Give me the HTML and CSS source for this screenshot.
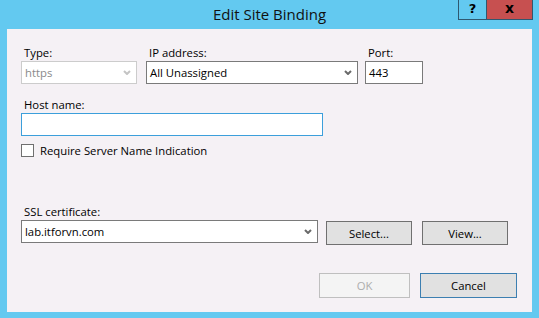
FILE: index.html
```html
<!DOCTYPE html>
<html lang="en">
<head>
    <meta charset="UTF-8">
    <title>Edit Site Binding</title>
    <link rel="stylesheet" href="styles.css">
</head>
<body>
    <div class="window">
        <div class="titlebar">
            <span></span>
            <span class="title">Edit Site Binding</span>
            <div class="caption-btns">
                <span class="cap-help">?</span>
                <span class="cap-close">x</span>
            </div>
        </div>
        <div class="client">
            <div class="row-top">
                <div class="field f-type">
                    <label>Type:</label>
                    <div class="combo disabled">
                        <span>https</span>
                        <svg width="8" height="5" viewBox="0 0 8 5"><polyline points="1,1 4,4 7,1" fill="none" stroke="#c4c4c4" stroke-width="2"/></svg>
                    </div>
                </div>
                <div class="field f-ip">
                    <label>IP address:</label>
                    <div class="combo">
                        <span>All Unassigned</span>
                        <svg width="8" height="5" viewBox="0 0 8 5"><polyline points="1,1 4,4 7,1" fill="none" stroke="#6a6a6a" stroke-width="2"/></svg>
                    </div>
                </div>
                <div class="field f-port">
                    <label>Port:</label>
                    <div class="textbox">443</div>
                </div>
            </div>
            <div class="field f-host">
                <label>Host name:</label>
                <div class="textbox focused"></div>
            </div>
            <div class="check-row">
                <span class="checkbox"></span>
                <span>Require Server Name Indication</span>
            </div>
            <div class="field f-ssl">
                <label>SSL certificate:</label>
                <div class="ssl-row">
                    <div class="combo ssl-combo">
                        <span>lab.itforvn.com</span>
                        <svg width="8" height="5" viewBox="0 0 8 5"><polyline points="1,1 4,4 7,1" fill="none" stroke="#6a6a6a" stroke-width="2"/></svg>
                    </div>
                    <button class="btn btn-select">Select...</button>
                    <button class="btn btn-view">View...</button>
                </div>
            </div>
            <div class="actions">
                <button class="btn btn-ok" disabled>OK</button>
                <button class="btn btn-cancel">Cancel</button>
            </div>
        </div>
    </div>
</body>
</html>
```

FILE: styles.css
```css
body {
    margin: 0;
    background: #63c9f0;
    font-family: "Open Sans", "Noto Sans", sans-serif;
    font-size: 11.3px;
    color: #000;
}
.window {
    width: 539px;
    height: 318px;
    background: #63c9f0;
}
.titlebar {
    height: 29px;
    display: grid;
    grid-template-columns: 1fr auto 1fr;
    align-items: start;
}
.title {
    font-size: 15px;
    line-height: 29px;
    color: #111;
}
.caption-btns {
    justify-self: end;
    display: flex;
    margin-right: 6px;
    border: 1px solid #2f5870;
    border-top: none;
    height: 19px;
}
.cap-help {
    width: 27px;
    border-right: 1px solid #2f5870;
    text-align: center;
    font-weight: bold;
    font-size: 13px;
    line-height: 18px;
    font-family: "DejaVu Sans", sans-serif;
}
.cap-close {
    width: 45px;
    background: #c75050;
    text-align: center;
    font-weight: bold;
    font-size: 14px;
    line-height: 16px;
    font-family: "DejaVu Sans", sans-serif;
}
.client {
    height: 283px;
    margin: 0 7px;
    background: #f5f1f5;
    box-sizing: border-box;
    padding: 15px 0 0 14px;
}
.field label {
    display: block;
    height: 17px;
    line-height: 17px;
    padding-left: 3px;
}
.row-top {
    display: flex;
}
.f-type { width: 116px; margin-right: 9px; }
.f-ip { width: 212px; margin-right: 7px; }
.f-port { width: 58px; }
.combo,
.textbox {
    height: 23px;
    box-sizing: border-box;
    border: 1px solid #7a7a7a;
    background: #fff;
    display: flex;
    align-items: center;
    padding: 0 5px 0 3px;
    line-height: 21px;
}
.combo span {
    flex: 1;
}
.combo.disabled {
    border-color: #cccccc;
    color: #8a8a8a;
}
.f-host {
    margin-top: 12px;
}
.f-host .textbox {
    width: 302px;
}
.textbox.focused {
    border-color: #3c9fdb;
}
.check-row {
    margin-top: 8px;
    display: flex;
    align-items: center;
    height: 13px;
}
.checkbox {
    width: 13px;
    height: 13px;
    box-sizing: border-box;
    border: 1px solid #707070;
    background: #fff;
    margin-right: 6px;
}
.f-ssl {
    margin-top: 46px;
}
.ssl-row {
    display: flex;
    align-items: flex-start;
}
.ssl-combo {
    width: 297px;
    margin-right: 8px;
}
.btn {
    font-family: inherit;
    font-size: 11.3px;
    color: #000;
    background: #e1e1e1;
    border: 1px solid #707070;
    padding: 0;
    box-sizing: border-box;
}
.btn-select,
.btn-view {
    width: 86px;
    height: 24px;
    margin-top: 1px;
}
.btn-select { margin-right: 10px; }
.actions {
    margin-top: 28px;
    display: flex;
    justify-content: flex-end;
    padding-right: 15px;
}
.btn-ok {
    width: 91px;
    height: 25px;
    margin-right: 10px;
    background: #f4f4f4;
    border-color: #bfbfbf;
    color: #adadad;
}
.btn-cancel {
    width: 97px;
    height: 25px;
    border-color: #3c7fb1;
}
```
